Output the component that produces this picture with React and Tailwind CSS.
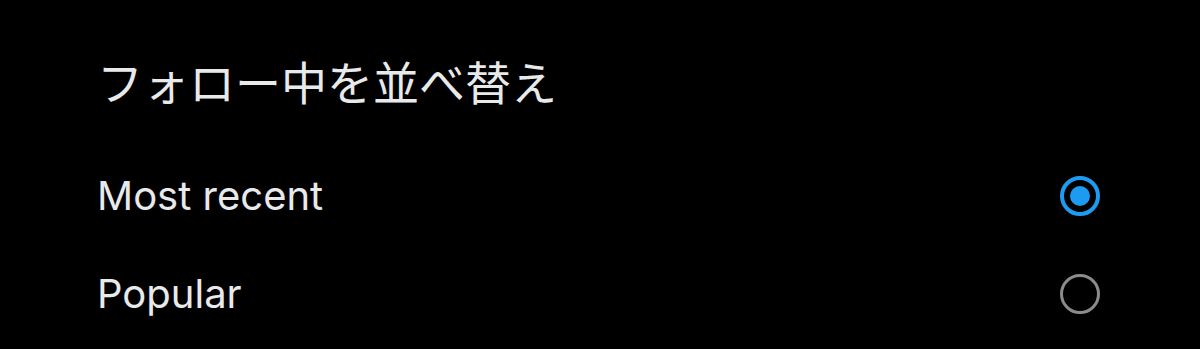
import { useState } from "react";

const options = [
  { id: "recent", label: "Most recent" },
  { id: "popular", label: "Popular" },
];

const Radio = ({ checked }) => (
  <span
    className={`flex h-[40px] w-[40px] items-center justify-center rounded-full ${
      checked ? "border-[4px] border-[#1d9bf0]" : "border-[3px] border-[#8b8b8b]"
    }`}
  >
    {checked && <span className="h-[20px] w-[20px] rounded-full bg-[#1d9bf0]" />}
  </span>
);

const App = () => {
  const [sort, setSort] = useState("recent");

  return (
    <div
      className="h-[349px] w-full bg-black pl-[97px] pr-[100px] text-[#e7e9ea]"
      style={{ fontFamily: "Inter, 'Noto Sans CJK JP', sans-serif" }}
    >
      <h3
        className="pt-[53px] text-[46px] leading-[54px] font-normal"
        style={{ fontFamily: "'Noto Sans CJK JP', sans-serif" }}
      >
        フォロー中を並べ替え
      </h3>
      <div className="mt-[40px]">
        {options.map((o) => (
          <button
            key={o.id}
            onClick={() => setSort(o.id)}
            className="flex h-[98px] w-full items-center justify-between text-left"
          >
            <span className="text-[40px] leading-none">{o.label}</span>
            <Radio checked={sort === o.id} />
          </button>
        ))}
      </div>
    </div>
  );
};

export default App;
